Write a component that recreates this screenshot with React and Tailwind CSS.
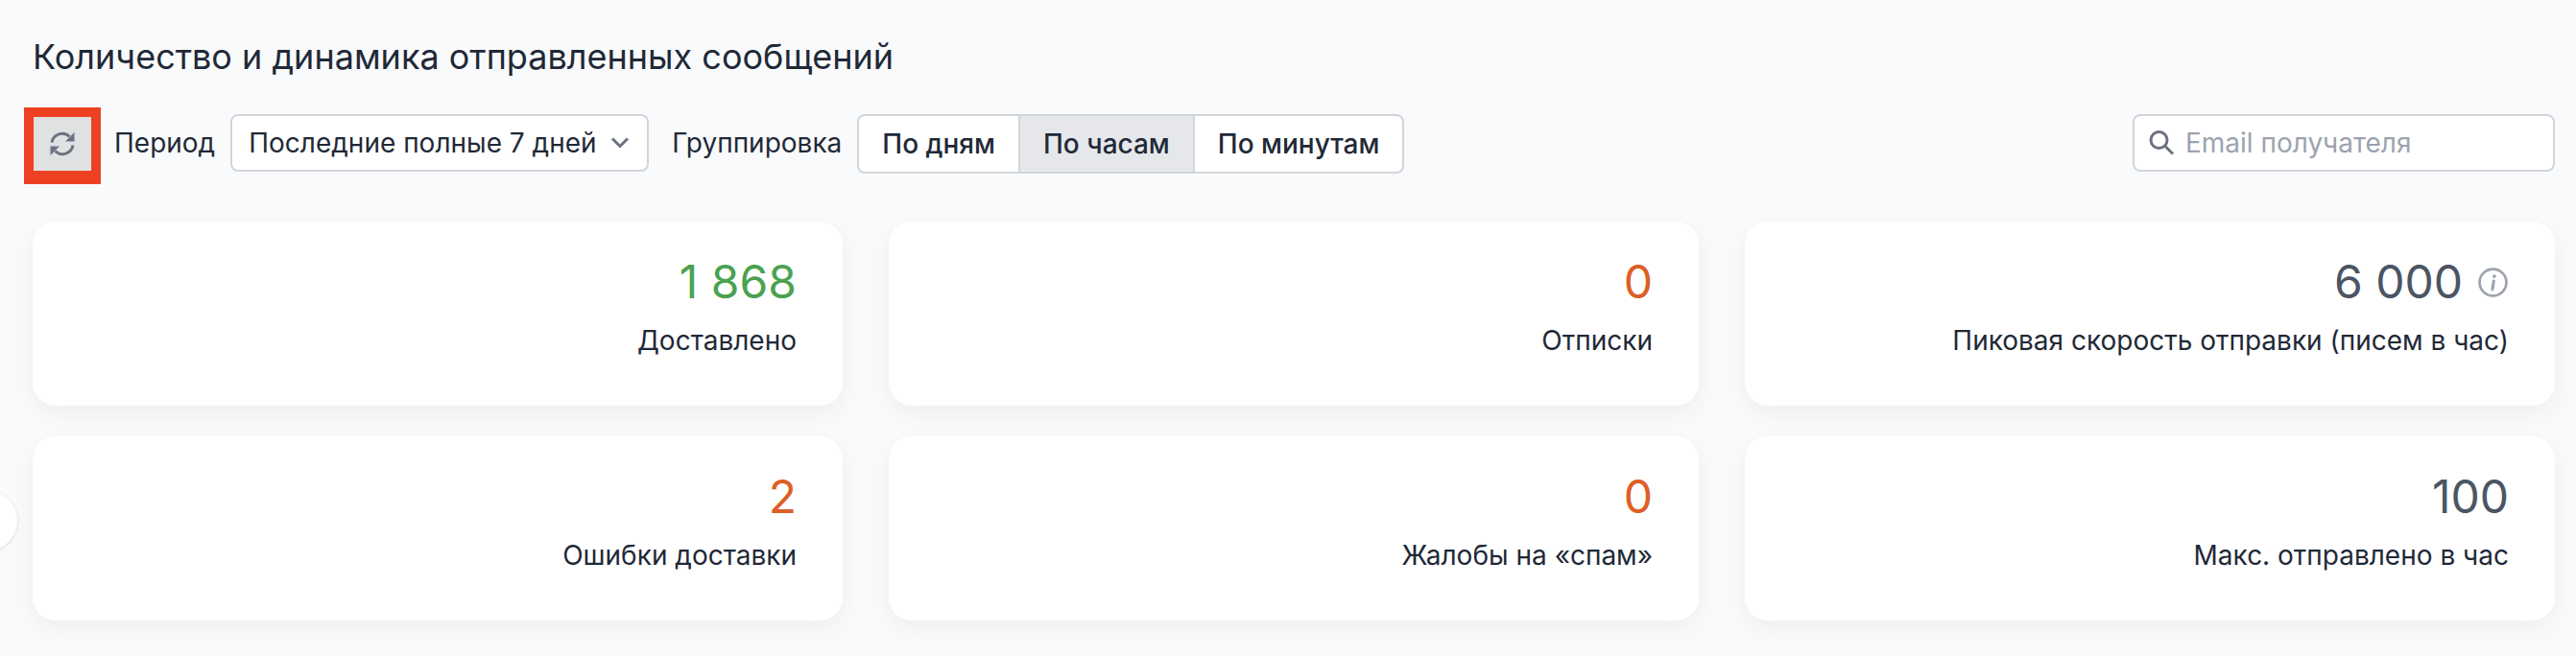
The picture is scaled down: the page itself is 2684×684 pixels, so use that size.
import React from "react";

const Card = ({ value, label, color, info }) => (
  <div className="h-[192px] bg-white rounded-[24px] shadow-[0_8px_24px_rgba(0,0,0,0.05)] px-[48px] pt-[31px] flex flex-col items-end">
    <div className="flex items-center gap-[16px] h-[64px]">
      <span className={`text-[48px] leading-[64px] ${color}`}>{value}</span>
      {info && (
        <svg className="mr-[1px]" width="31" height="31" viewBox="0 0 30 30" fill="none" stroke="#9ca3af" strokeWidth="2.6">
          <circle cx="15" cy="15" r="13.5" />
          <path d="M15.8 13.5 14.4 22" strokeLinecap="round" strokeWidth="3" />
          <circle cx="16.4" cy="8.8" r="1.8" fill="#9ca3af" stroke="none" />
        </svg>
      )}
    </div>
    <div className="mt-[9px] text-[28px] leading-[40px] text-[#1f2937]">{label}</div>
  </div>
);

const groups = ["По дням", "По часам", "По минутам"];

export default function App() {
  return (
    <div className="relative h-[684px] overflow-hidden bg-[#f9fafb] font-['Inter',sans-serif] pl-[34px] pr-[22px] pt-[34px]">
      <h1 className="text-[36px] leading-[50px] text-[#1f2937]">
        Количество и динамика отправленных сообщений
      </h1>

      <div className="mt-[35px] h-[62px] flex items-start">
        <button className="mr-[14px] -ml-[9px] -mt-[7px] w-[80px] h-[80px] shrink-0 border-[#ee4124] border-solid border-x-[10px] border-t-[10px] border-b-[14px] bg-[#dfe1e2] flex items-center justify-center">
          <svg width="28" height="28" viewBox="0 0 28 28" fill="none" stroke="#6b7280" strokeWidth="3">
            <path d="M3 12.5A11 11 0 0 1 21.5 6.5" />
            <path d="M25 15.5A11 11 0 0 1 6.5 21.5" />
            <path d="M26.5 2v9.5H17z" fill="#6b7280" stroke="none" />
            <path d="M1.5 26v-9.5H11z" fill="#6b7280" stroke="none" />
          </svg>
        </button>
        <span className="text-[28px] leading-[60px] text-[#1f2937]">Период</span>
        <div className="ml-[16px] w-[436px] h-[60px] bg-white border-2 border-[#d1d5db] rounded-[8px] pl-[17px] pr-[18px] flex items-center justify-between text-[28px] text-[#1f2937]">
          <span>Последние полные 7 дней</span>
          <svg width="20" height="14" viewBox="0 0 20 14" fill="none" stroke="#6b7280" strokeWidth="3">
            <path d="m2 2.5 8 8 8-8" />
          </svg>
        </div>
        <span className="ml-[24px] text-[28px] leading-[60px] text-[#1f2937]">Группировка</span>
        <div className="ml-[16px] h-[62px] flex border-2 border-[#d1d5db] rounded-[8px] overflow-hidden bg-white">
          {groups.map((g, i) => (
            <div
              key={g}
              className={`px-[24px] flex items-center text-[28px] font-medium text-[#1f2937] ${
                i > 0 ? "border-l-2 border-[#d1d5db]" : ""
              } ${i === 1 ? "bg-[#e5e7eb]" : ""}`}
            >
              {g}
            </div>
          ))}
        </div>
        <div className="ml-auto w-[440px] h-[60px] bg-white border-2 border-[#d1d5db] rounded-[8px] pl-[14px] flex items-center gap-[11px]">
          <svg width="28" height="28" viewBox="0 0 28 28" fill="none" stroke="#6b7280" strokeWidth="3">
            <circle cx="11.5" cy="11" r="8.5" />
            <path d="m18 17.5 8 8" />
          </svg>
          <span className="text-[28px] text-[#9ca3af]">Email получателя</span>
        </div>
      </div>

      <div className="mt-[50px] grid grid-cols-3 gap-x-[48px] gap-y-[32px]">
        <Card value="1 868" label="Доставлено" color="text-[#4aa24f]" />
        <Card value="0" label="Отписки" color="text-[#dd5f26]" />
        <Card value="6 000" label="Пиковая скорость отправки (писем в час)" color="text-[#4b5563]" info />
        <Card value="2" label="Ошибки доставки" color="text-[#dd5f26]" />
        <Card value="0" label="Жалобы на «спам»" color="text-[#dd5f26]" />
        <Card value="100" label="Макс. отправлено в час" color="text-[#4b5563]" />
      </div>

      {/* collapsed sidebar handle */}
      <div className="absolute left-[-44px] top-[512px] w-[62px] h-[62px] rounded-full bg-white shadow-[0_1px_4px_rgba(0,0,0,0.12)]" />
    </div>
  );
}
